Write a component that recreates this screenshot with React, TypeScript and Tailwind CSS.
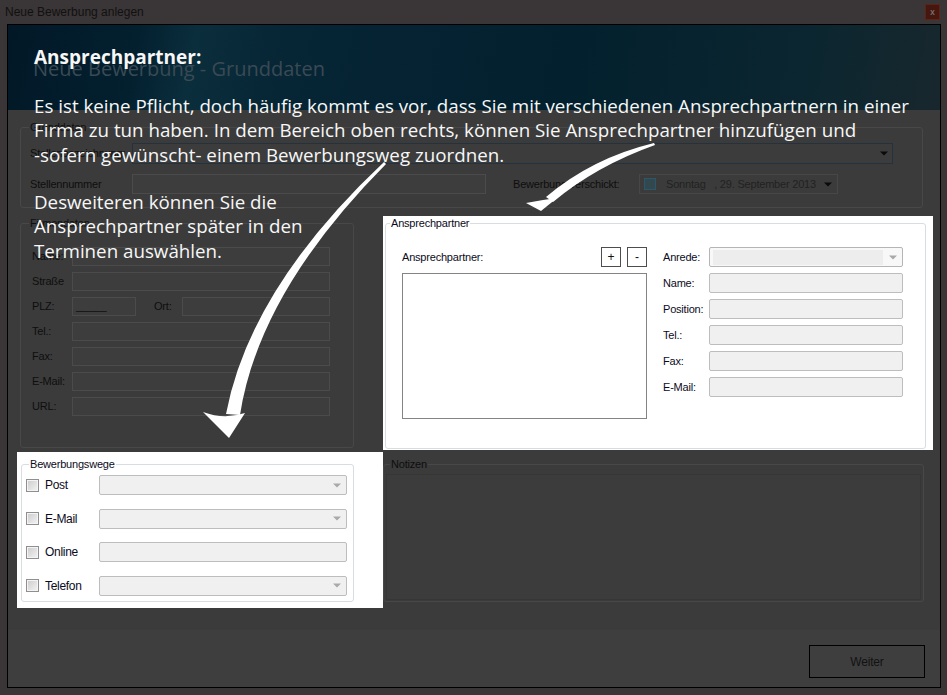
import React from "react";

type P = { children?: React.ReactNode; className?: string };

const DimLabel = ({ children, className = "" }: P) => (
  <span className={`whitespace-nowrap text-[11px] leading-[13px] tracking-[-0.2px] text-[#0e0e0e] ${className}`}>{children}</span>
);

const DimBox = ({ children, className = "" }: P) => (
  <div className={`flex h-[19px] items-center border border-[#4b4b4b] bg-[#3d3d3d] ${className}`}>{children}</div>
);

const LightLabel = ({ children, className = "" }: P) => (
  <span className={`whitespace-nowrap text-[11px] leading-[13px] tracking-[-0.2px] text-[#0b0b1c] ${className}`}>{children}</span>
);

const Arrow = ({ color }: { color: string }) => (
  <svg width="8" height="5" viewBox="0 0 8 5">
    <path d="M0 0.5 L8 0.5 L4 4.5 Z" fill={color} />
  </svg>
);

const LightCombo = ({ className = "" }: P) => (
  <div className={`flex h-[20px] items-center justify-end rounded-[2px] border border-[#bdbdbd] bg-[#f0f0f0] pr-[5px] ${className}`}>
    <Arrow color="#a9a9a9" />
  </div>
);

const LightField = ({ className = "" }: P) => (
  <div className={`h-[20px] rounded-[2px] border border-[#bdbdbd] bg-[#f0f0f0] ${className}`} />
);

const CheckBox = () => (
  <div className="flex h-[13px] w-[13px] items-center justify-center border border-[#8e8f8f] bg-[#f4f4f4]">
    <div className="h-[9px] w-[9px] bg-[linear-gradient(135deg,#cfcfcf,#f0f0f0)]" />
  </div>
);

function GroupBox({
  title,
  light,
  labelPos,
  className = "",
  children,
}: {
  title: string;
  light?: boolean;
  labelPos: string;
  className?: string;
  children?: React.ReactNode;
}) {
  return (
    <div
      className={`relative rounded-[3px] border ${light ? "border-[#d8dde2]" : "border-[#484848]"} ${className}`}
    >
      <span
        className={`absolute top-[-7px] px-[1px] text-[11px] leading-[13px] tracking-[-0.2px] ${labelPos} ${
          light ? "bg-white text-[#0b0b1c]" : "bg-[#3b3b3b] text-[#0e0e0e]"
        }`}
      >
        {title}
      </span>
      {children}
    </div>
  );
}

export default function App() {
  const firmRows = ["Tel.:", "Fax:", "E-Mail:", "URL:"];
  const apRows = ["Name:", "Position:", "Tel.:", "Fax:", "E-Mail:"];
  return (
    <div className="relative h-[695px] w-[947px] overflow-hidden bg-[#3a3536] font-['Liberation_Sans',Arial,sans-serif]">
      {/* Title bar */}
      <div className="flex h-[24px] items-center justify-between pl-[5px] pr-[7px]">
        <span className="text-[12px] text-[#111]">Neue Bewerbung anlegen</span>
        <div className="flex h-[16px] w-[15px] items-center justify-center border border-[#5c2418] bg-[#45170f] text-[9px] leading-none text-[#8a8a8a]">
          x
        </div>
      </div>

      {/* Client */}
      <div className="ml-[7px] mr-[6px] flex h-[664px] flex-col border border-black">
        {/* Header */}
        <div className="h-[85px] bg-[linear-gradient(100deg,#021827_0%,#03202f_14%,#0b2e3c_20%,#062535_30%,#03202e_60%,#0b2630_85%,#18272d_100%)] pl-[25px] pt-[32px]">
          <div className="font-['Open_Sans',sans-serif] text-[20px] leading-[24px] text-[#3a4a54]">
            Neue Bewerbung - Grunddaten
          </div>
        </div>

        {/* Body */}
        <div className="flex flex-1 flex-col bg-[#3c3c3c]">
          <div className="h-[520px] bg-[#3b3b3b] pl-[12px] pt-[17px]">
            {/* Grunddaten */}
            <GroupBox title="Grunddaten" labelPos="left-[8px]" className="h-[81px] w-[903px]">
              <div className="flex flex-col pl-[9px] pt-[15px]">
                <div className="flex items-center">
                  <DimLabel className="w-[102px]">Stellenbezeichnung:</DimLabel>
                  <div className="flex h-[21px] w-[761px] items-center justify-end border border-[#24323d] bg-[#3c3c3c] pr-[4px]">
                    <Arrow color="#0a0a0a" />
                  </div>
                </div>
                <div className="mt-[10px] flex items-center">
                  <DimLabel className="w-[102px]">Stellennummer</DimLabel>
                  <DimBox className="h-[20px] w-[354px]" />
                  <DimLabel className="ml-[27px] w-[126px]">Bewerbung verschickt:</DimLabel>
                  <div className="flex h-[20px] w-[199px] items-center border border-[#474747] pl-[4px] pr-[5px]">
                    <div className="h-[12px] w-[12px] border border-[#2b5868] bg-[#33474f]" />
                    <span className="ml-[10px] whitespace-pre text-[11px] tracking-[-0.2px] text-[#222]">
                      Sonntag   , 29. September 2013
                    </span>
                    <div className="ml-auto">
                      <Arrow color="#0a0a0a" />
                    </div>
                  </div>
                </div>
              </div>
            </GroupBox>

            {/* Row 2 */}
            <div className="mt-[8px] flex">
              <GroupBox title="Firmendaten" labelPos="left-[8px]" className="mt-[7px] h-[225px] w-[334px]">
                <div className="flex flex-col gap-[6px] pl-[11px] pt-[23px]">
                  <div className="flex items-center">
                    <DimLabel className="w-[40px]">Name:</DimLabel>
                    <DimBox className="w-[258px]" />
                  </div>
                  <div className="flex items-center">
                    <DimLabel className="w-[40px]">Straße</DimLabel>
                    <DimBox className="w-[258px]" />
                  </div>
                  <div className="flex items-center">
                    <DimLabel className="w-[40px]">PLZ:</DimLabel>
                    <DimBox className="w-[64px] pl-[3px]">
                      <span className="text-[11px] leading-none text-[#0d0d0d]">_____</span>
                    </DimBox>
                    <DimLabel className="ml-[18px] w-[28px]">Ort:</DimLabel>
                    <DimBox className="w-[148px]" />
                  </div>
                  {firmRows.map((r) => (
                    <div key={r} className="flex items-center">
                      <DimLabel className="w-[40px]">{r}</DimLabel>
                      <DimBox className="w-[258px]" />
                    </div>
                  ))}
                </div>
              </GroupBox>

              {/* Highlighted Ansprechpartner */}
              <div className="ml-[29px] h-[234px] w-[550px] bg-white pl-[2px] pt-[7px]">
                <GroupBox title="Ansprechpartner" light labelPos="left-[4px]" className="h-[226px] w-[541px]">
                  <div className="flex pl-[16px] pt-[23px]">
                    <div className="flex w-[245px] flex-col gap-[6px]">
                      <div className="flex h-[20px] items-center justify-between">
                        <LightLabel>Ansprechpartner:</LightLabel>
                        <div className="flex gap-[6px]">
                          <div className="flex h-[20px] w-[20px] items-center justify-center border border-[#4d4d4d] bg-white text-[12px] leading-none text-[#111]">
                            +
                          </div>
                          <div className="flex h-[20px] w-[20px] items-center justify-center border border-[#4d4d4d] bg-white text-[12px] leading-none text-[#111]">
                            -
                          </div>
                        </div>
                      </div>
                      <div className="h-[146px] border border-[#848484] bg-white" />
                    </div>
                    <div className="ml-[16px] flex flex-col gap-[6px]">
                      <div className="flex items-center">
                        <LightLabel className="w-[46px]">Anrede:</LightLabel>
                        <div className="flex h-[20px] w-[194px] items-center rounded-[2px] border border-[#b5b5b5] bg-[#f8f8f8] pl-[3px] pr-[5px]">
                          <div className="h-[15px] flex-1 bg-[#ededed]" />
                          <div className="ml-[6px]">
                            <Arrow color="#a9a9a9" />
                          </div>
                        </div>
                      </div>
                      {apRows.map((r) => (
                        <div key={r} className="flex items-center">
                          <LightLabel className="w-[46px]">{r}</LightLabel>
                          <LightField className="w-[194px]" />
                        </div>
                      ))}
                    </div>
                  </div>
                </GroupBox>
              </div>
            </div>

            {/* Row 3 */}
            <div className="flex">
              <div className="-ml-[3px] mt-[2px] h-[156px] w-[366px] bg-white pl-[4px] pt-[12px]">
                <GroupBox title="Bewerbungswege" light labelPos="left-[7px]" className="h-[138px] w-[333px]">
                  <div className="flex flex-col gap-[13.5px] pl-[4px] pt-[10px]">
                    {[
                      { l: "Post", combo: true },
                      { l: "E-Mail", combo: true },
                      { l: "Online", combo: false },
                      { l: "Telefon", combo: true },
                    ].map((r) => (
                      <div key={r.l} className="flex h-[20px] items-center">
                        <CheckBox />
                        <span className="ml-[6px] w-[54px] text-[12px] tracking-[-0.3px] text-[#0b0b1c]">{r.l}</span>
                        {r.combo ? <LightCombo className="w-[248px]" /> : <LightField className="w-[248px]" />}
                      </div>
                    ))}
                  </div>
                </GroupBox>
              </div>
              <GroupBox title="Notizen" labelPos="left-[6px]" className="mt-[14px] h-[138px] w-[541px]">
                <div className="px-[2px] pt-[9px]">
                  <div className="h-[126px] border border-[#363636] bg-[#3c3c3c]" />
                </div>
              </GroupBox>
            </div>
          </div>

          {/* Footer */}
          <div className="flex flex-1 justify-end bg-[#3e3e3e] pr-[15px] pt-[15px]">
            <div className="flex h-[33px] w-[116px] items-center justify-center border border-black text-[12px] tracking-[-0.2px] text-[#121212]">
              Weiter
            </div>
          </div>
        </div>
      </div>

      {/* Arrows */}
      <svg className="pointer-events-none absolute left-0 top-0" width="947" height="695" viewBox="0 0 947 695">
        <path d="M654 143 Q592 158 546 197 L553 202 Q596 166 655 145 Z" fill="#ffffff" />
        <path d="M526 203 Q541 200 557 198 L541 211 Z" fill="#ffffff" />
        <path d="M384 162 Q250 288 226 414 L240 415 Q259 292 386 164 Z" fill="#ffffff" />
        <path d="M203 412 Q224 420 245 413 L229 438 Z" fill="#ffffff" />
      </svg>

      {/* Tutorial text */}
      <div className="pointer-events-none absolute left-[34px] top-[43px] whitespace-nowrap font-['Open_Sans',sans-serif] text-[#f7f7f7]">
        <div className="text-[19px] font-bold leading-[28px]">Ansprechpartner:</div>
        <p className="mt-[22.5px] text-[18.75px] leading-[24.5px]">
          Es ist keine Pflicht, doch häufig kommt es vor, dass Sie mit verschiedenen Ansprechpartnern in einer
          <br />
          Firma zu tun haben. In dem Bereich oben rechts, können Sie Ansprechpartner hinzufügen und
          <br />
          -sofern gewünscht- einem Bewerbungsweg zuordnen.
        </p>
        <p className="mt-[22.5px] text-[18.75px] leading-[24.5px]">
          Desweiteren können Sie die
          <br />
          Ansprechpartner später in den
          <br />
          Terminen auswählen.
        </p>
      </div>
    </div>
  );
}
